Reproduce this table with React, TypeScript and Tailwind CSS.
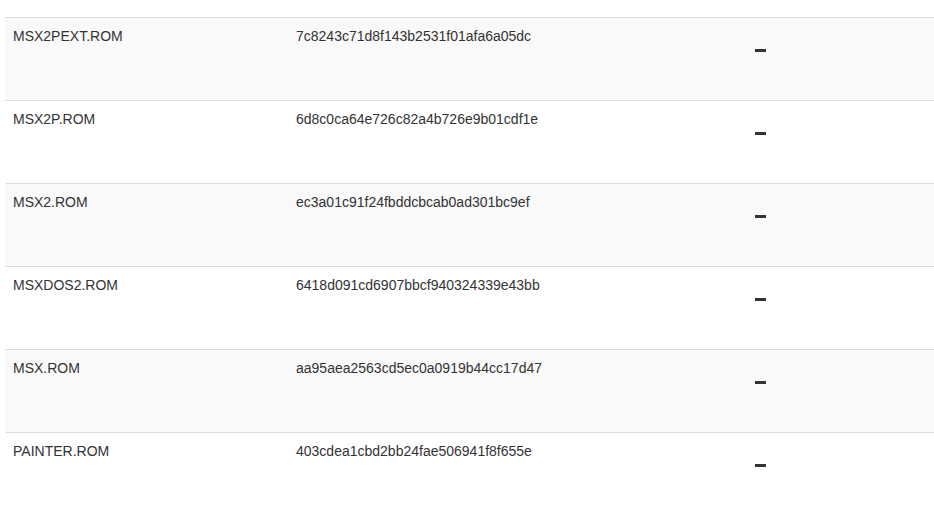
const rows = [
  { name: "MSX2PEXT.ROM", hash: "7c8243c71d8f143b2531f01afa6a05dc" },
  { name: "MSX2P.ROM", hash: "6d8c0ca64e726c82a4b726e9b01cdf1e" },
  { name: "MSX2.ROM", hash: "ec3a01c91f24fbddcbcab0ad301bc9ef" },
  { name: "MSXDOS2.ROM", hash: "6418d091cd6907bbcf940324339e43bb" },
  { name: "MSX.ROM", hash: "aa95aea2563cd5ec0a0919b44cc17d47" },
  { name: "PAINTER.ROM", hash: "403cdea1cbd2bb24fae506941f8f655e" },
];

export default function App() {
  return (
    <div className="min-h-screen bg-white pl-[5px] pt-[17px] font-['Liberation_Sans',Arial,sans-serif] text-[14px] leading-[20px] text-[#333]">
      <table className="w-[929px] border-collapse table-fixed">
        <tbody>
          {rows.map((r, i) => (
            <tr key={r.name} className={i % 2 === 0 ? "bg-[#f9f9f9]" : "bg-white"}>
              <td className="w-[283px] border-t border-[#ddd] p-2 align-top">{r.name}</td>
              <td className="w-[298px] border-t border-[#ddd] p-2 align-top">{r.hash}</td>
              <td className="border-t border-[#ddd] p-2 align-top text-center">
                <div className="h-[66px] pt-[23px]">
                  <span className="inline-block h-[3px] w-[11px] bg-[#333] align-top" aria-label="–" />
                </div>
              </td>
            </tr>
          ))}
        </tbody>
      </table>
    </div>
  );
}
